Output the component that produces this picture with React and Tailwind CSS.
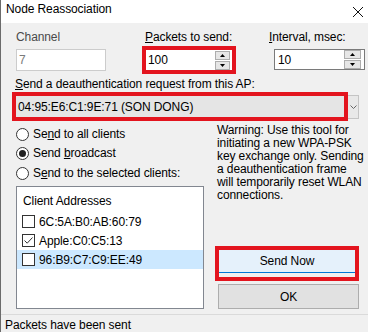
const RED = "border-[#e3141e]";

const SpinButtons = ({ size }) => (
	<div className="flex flex-col gap-px">
		<div className={`${size} h-[9px] bg-[#e6e6e6] border border-[#adadad] flex items-center justify-center`}>
			<svg width="5" height="3" viewBox="0 0 5 3">
				<path d="M2.5 0L5 3H0z" fill="#000" />
			</svg>
		</div>
		<div className={`${size} h-[9px] bg-[#e6e6e6] border border-[#adadad] flex items-center justify-center`}>
			<svg width="5" height="3" viewBox="0 0 5 3">
				<path d="M0 0h5L2.5 3z" fill="#000" />
			</svg>
		</div>
	</div>
);

const Radio = ({ checked, children }) => (
	<div className="h-[19.5px] flex items-center gap-[4px]">
		<div className="w-[13px] h-[13px] rounded-full border border-[#333] bg-white flex items-center justify-center">
			{checked && <div className="w-[7px] h-[7px] rounded-full bg-[#222]" />}
		</div>
		<span className="leading-[15px]">{children}</span>
	</div>
);

const ClientRow = ({ label, checked, selected }) => (
	<div className={`h-[19px] flex items-center gap-[4px] pl-[5px] ${selected ? "bg-[#cce8ff]" : ""}`}>
		<div className="w-[13px] h-[13px] border border-[#333] bg-white flex items-center justify-center">
			{checked && (
				<svg width="11" height="11" viewBox="0 0 11 11">
					<path d="M1.5 5.5L4.2 8.2L9.5 2.5" fill="none" stroke="#333" strokeWidth="1" />
				</svg>
			)}
		</div>
		<span>{label}</span>
	</div>
);

export default function App() {
	return (
		<div className="w-[368px] h-[332px] overflow-hidden bg-[#f0f0f0] border-l border-[#6b6b6b] text-black text-[12px] tracking-[-0.1px] font-['Liberation_Sans',Arial,sans-serif]">
			{/* Title bar */}
			<div className="h-[23px] bg-white flex items-start justify-between pl-[5px] pr-[5px]">
				<span className="pt-[2px] leading-[15px]">Node Reassociation</span>
				<svg className="mt-[7px]" width="10" height="10" viewBox="0 0 10 10">
					<path d="M0 0L10 10M10 0L0 10" stroke="#111" strokeWidth="1" />
				</svg>
			</div>

			{/* Top inputs */}
			<div className="mt-[7px] flex items-start pl-[15px]">
				<div className="w-[90px] flex flex-col">
					<span className="leading-[15px] text-[#4a4a4a]">Channel</span>
					<div className="mt-[4px] h-[22px] border border-[#cccccc] bg-white flex items-center pl-[2px] text-[#7a7a7a]">7</div>
				</div>
				<div className="ml-[36px] w-[94px] flex flex-col">
					<span className="pl-[3px] leading-[15px]">
						<span className="underline">P</span>ackets to send:
					</span>
					<div className={`mt-[1px] h-[28px] border-4 ${RED} bg-white flex items-center`}>
						<span className="flex-1 pl-[2px]">100</span>
						<div className="mr-[2px]">
							<SpinButtons size="w-[15px]" />
						</div>
					</div>
				</div>
				<div className="ml-[33px] flex flex-col">
					<span className="leading-[15px]">
						<span className="underline">I</span>nterval, msec:
					</span>
					<div className="mt-[4px] ml-[5px] w-[91px] h-[21px] border border-[#7a7a7a] bg-white flex items-center">
						<span className="flex-1 pl-[3px]">10</span>
						<div className="mr-[3px]">
							<SpinButtons size="w-[17px]" />
						</div>
					</div>
				</div>
			</div>

			{/* AP combo */}
			<div className="mt-[3px] pl-[14px] leading-[15px]">
				<span className="underline">S</span>end a deauthentication request from this AP:
			</div>
			<div className="pl-[11px] flex items-center h-[29px]">
				<div className={`w-[336px] h-[29px] border-4 ${RED} bg-[#e5e5e5] flex items-center pl-[2px]`}>
					04:95:E6:C1:9E:71 (SON DONG)
				</div>
				<div className="w-[11px] h-[24px] border border-l-0 border-[#c4c4c4] bg-[#e8e8e8] flex items-center justify-center">
					<svg width="7" height="4" viewBox="0 0 7 4">
						<path d="M0.5 0.5L3.5 3.5L6.5 0.5" fill="none" stroke="#666" strokeWidth="1" />
					</svg>
				</div>
			</div>

			{/* Options + actions */}
			<div className="mt-[1px] pl-[15px] flex items-start">
				<div className="w-[188px] flex flex-col">
					<div className="mt-[2.25px]">
						<Radio>
							Se<span className="underline">n</span>d to all clients
						</Radio>
						<Radio checked>
							Send <span className="underline">b</span>roadcast
						</Radio>
						<Radio>
							S<span className="underline">e</span>nd to the selected clients:
						</Radio>
					</div>
					<div className="mt-[3.25px] h-[123px] border border-[#828790] bg-white pt-[4px]">
						<div className="h-[19px] flex items-center pl-[6px] mb-[2px]">Client Addresses</div>
						<ClientRow label="6C:5A:B0:AB:60:79" />
						<ClientRow label="Apple:C0:C5:13" checked />
						<ClientRow label="96:B9:C7:C9:EE:49" selected />
					</div>
				</div>
				<div className="ml-[11px] w-[144px] flex flex-col">
					<div className="mt-[2px] pl-[2px] leading-[13px] whitespace-nowrap">
						Warning: Use this tool for
						<br />
						initiating a new WPA-PSK
						<br />
						key exchange only. Sending
						<br />
						a deauthentication frame
						<br />
						will temporarily reset WLAN
						<br />
						connections.
					</div>
					<div className={`mt-[44px] h-[35px] border-4 ${RED}`}>
						<div className="h-[23px] bg-[#e5f1fb] border-b border-[#0078d7] flex items-center justify-center">
							Send Now
						</div>
					</div>
					<div className="mt-[3px] ml-[3px] w-[141px] h-[25px] bg-[#e1e1e1] border border-[#adadad] flex items-center justify-center">
						OK
					</div>
				</div>
			</div>

			{/* Status bar */}
			<div className="mt-[5px] border-t border-[#dadada] pt-[2.5px] pl-[4px] leading-[15px]">Packets have been sent</div>
		</div>
	);
}
